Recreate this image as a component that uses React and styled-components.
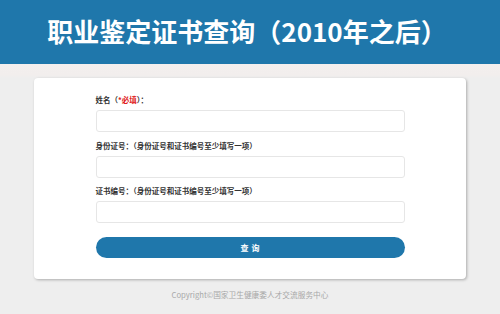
import React from "react";
import styled, { createGlobalStyle } from "styled-components";

const Global = createGlobalStyle`
  html, body { margin: 0; padding: 0; }
  body {
    background: #eeeeee;
    font-family: "Noto Sans CJK SC", "Noto Sans", sans-serif;
    width: 500px;
    height: 314px;
    overflow: hidden;
  }
`;

const Header = styled.header`
  height: 64px;
  background: #1f77ab;
  display: flex;
  align-items: center;
  justify-content: center;
`;

const Title = styled.h1`
  margin: 0;
  color: #ffffff;
  font-size: 26px;
  font-weight: 700;
  line-height: 1;
  transform: translate(-3px, -1px);
`;

const Main = styled.main`
  padding-top: 14px;
  display: flex;
  flex-direction: column;
  align-items: center;
  background: linear-gradient(#f3efee 0px, #f2eeed 11px, #eeeeee 14px);
`;

const Card = styled.section`
  width: 432px;
  box-sizing: border-box;
  background: #ffffff;
  border-radius: 4px;
  box-shadow: 1px 1px 3px rgba(0, 0, 0, 0.28);
  padding: 16px 0 21px;
  display: flex;
  flex-direction: column;
  align-items: center;
`;

const Field = styled.div`
  width: 309px;
  display: flex;
  flex-direction: column;
  margin-bottom: ${(p) => p.$gap}px;
`;

const Label = styled.label`
  font-size: 7.5px;
  line-height: 12px;
  height: 12px;
  color: #333333;
  font-weight: 700;
  margin-bottom: 4px;
`;

const Required = styled.span`
  color: #e02020;
`;

const Input = styled.input`
  height: 22px;
  box-sizing: border-box;
  border: 1px solid #e6e6e6;
  border-radius: 3px;
  background: #ffffff;
  outline: none;
  padding: 0 6px;
  font-size: 8px;
`;

const Button = styled.button`
  width: 309px;
  height: 21px;
  border: none;
  border-radius: 11px;
  background: #1f77ab;
  color: #ffffff;
  font-family: inherit;
  font-size: 8px;
  font-weight: 700;
  letter-spacing: 3px;
  padding: 0 0 0 3px;
  cursor: pointer;
`;

const Footer = styled.footer`
  text-align: center;
  color: #a8a8a8;
  font-size: 7.7px;
  line-height: 12px;
  margin-top: 10px;
`;

export default function App() {
  return (
    <>
      <Global />
      <Header>
        <Title>职业鉴定证书查询（2010年之后）</Title>
      </Header>
      <Main>
        <Card>
          <Field $gap={8}>
            <Label>
              姓名（<Required>*必填</Required>）：
            </Label>
            <Input />
          </Field>
          <Field $gap={7}>
            <Label>身份证号：（身份证号和证书编号至少填写一项）</Label>
            <Input />
          </Field>
          <Field $gap={14}>
            <Label>证书编号：（身份证号和证书编号至少填写一项）</Label>
            <Input />
          </Field>
          <Button>查询</Button>
        </Card>
        <Footer>Copyright©国家卫生健康委人才交流服务中心</Footer>
      </Main>
    </>
  );
}
